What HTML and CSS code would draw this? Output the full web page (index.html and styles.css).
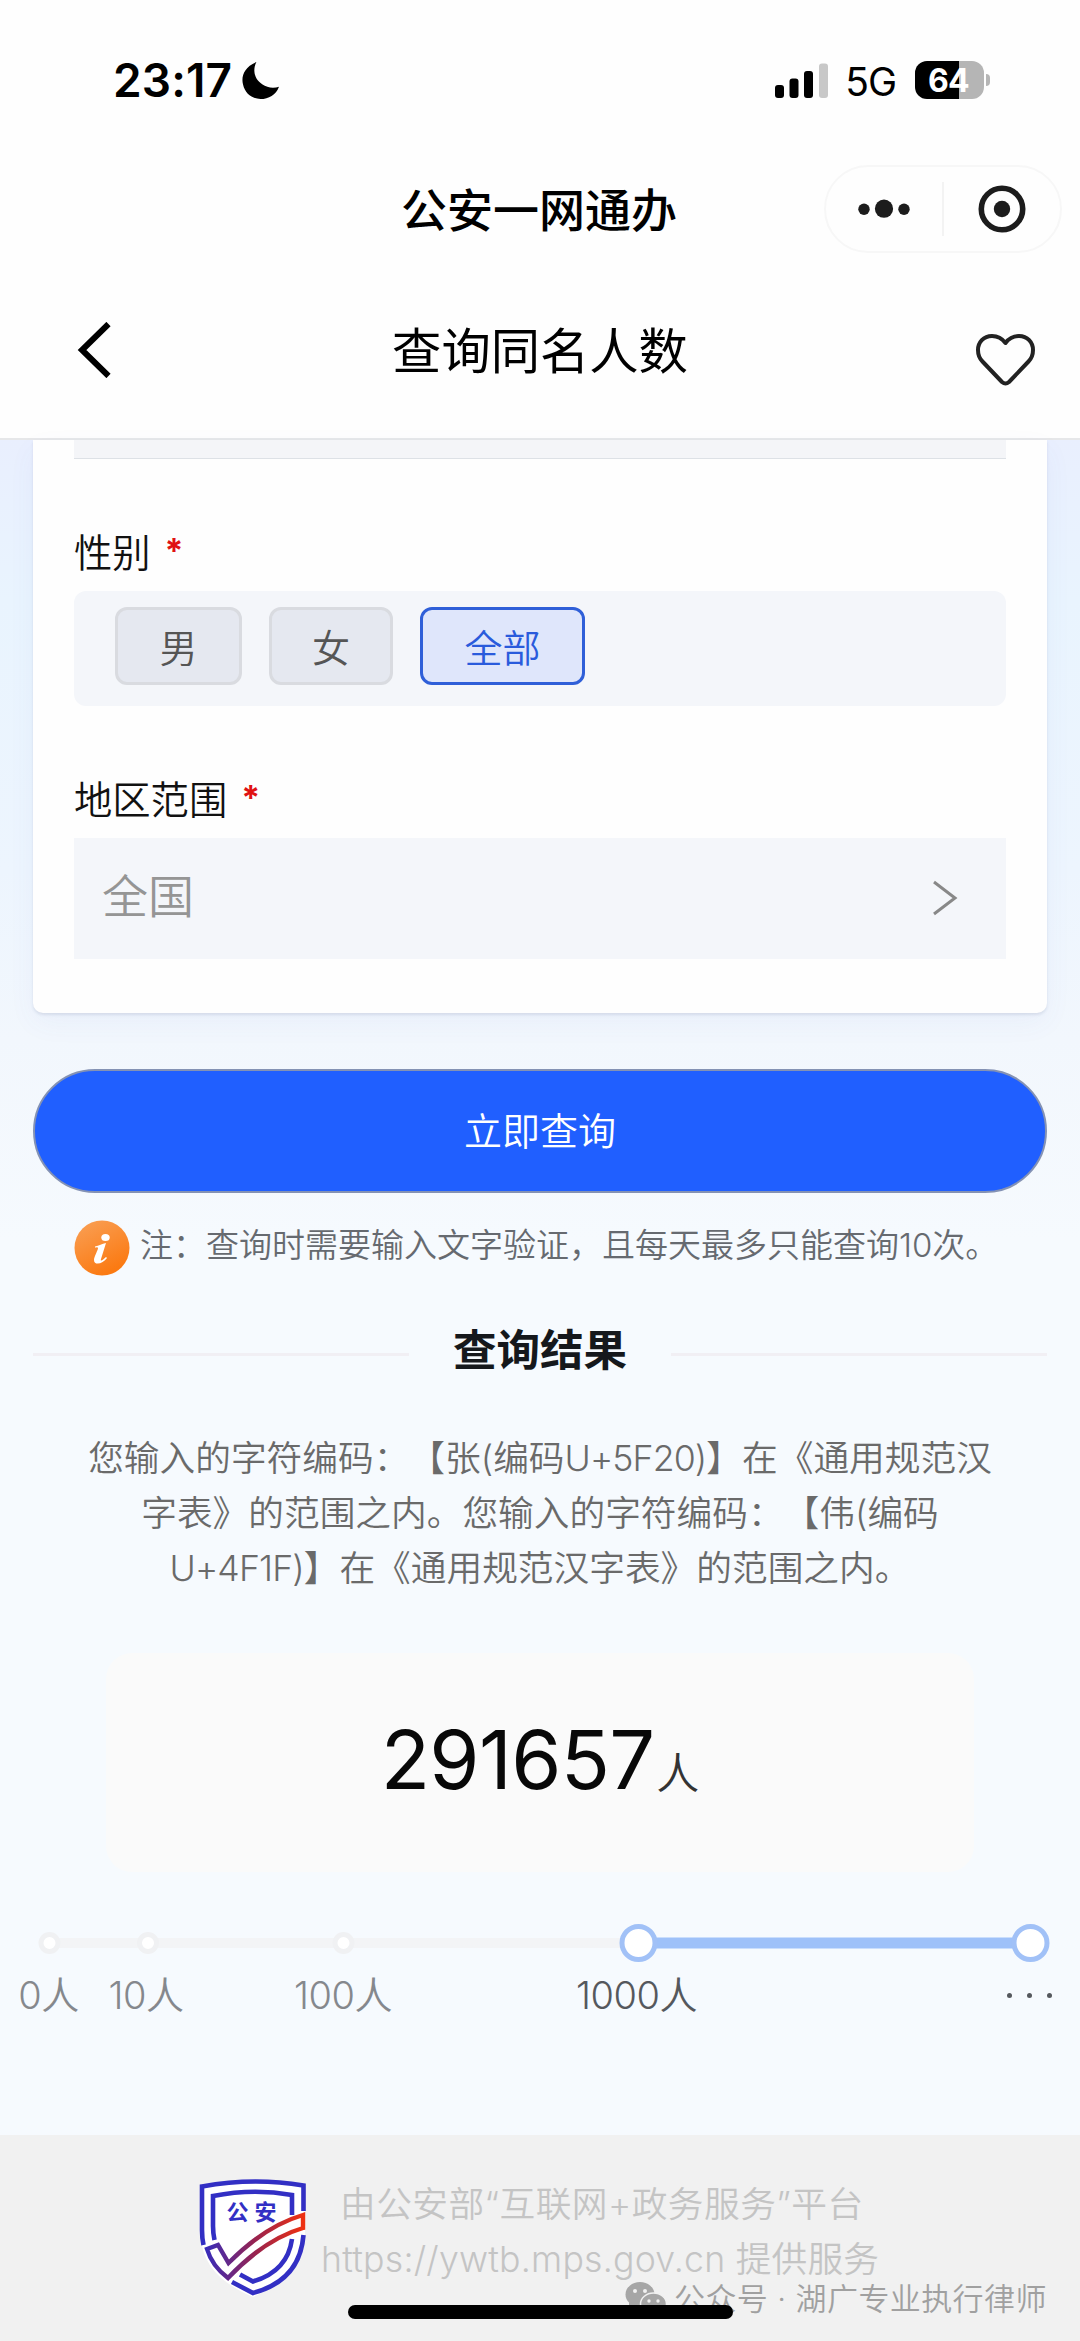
FILE: index.html
```html
<!DOCTYPE html>
<html lang="zh-CN">
<head>
<meta charset="utf-8">
<title>公安一网通办</title>
<link rel="stylesheet" href="styles.css">
</head>
<body>
<div class="screen">
  <header class="top">
    <div class="status">
      <div class="status-left">
        <span class="time">23:17</span>
        <svg class="moon" viewBox="0 0 36 36"><path d="M14 0C2 5-1 14 1 22c2 9 9 14 17 14 8 0 15-4 18-12-5 2-12 1-16-2C12 17 10 8 14 0z"/></svg>
      </div>
      <div class="status-right">
        <svg class="signal" viewBox="0 0 53 35"><rect y="22" width="9" height="13" rx="3"/><rect x="14.500" y="15.500" width="9" height="19.500" rx="3"/><rect x="29" y="8" width="9" height="27" rx="3"/><rect x="44" y="0.500" width="9" height="34.500" rx="3" fill="#c8c8c8"/></svg>
        <span class="net">5G</span>
        <div class="battery"><span>64</span></div>
        <div class="nub"></div>
      </div>
    </div>
    <div class="appbar">
      <h1 class="app-title">公安一网通办</h1>
      <div class="capsule">
        <svg class="dots" viewBox="0 0 52 20"><circle cx="6" cy="10.300" r="5.700"/><circle cx="26" cy="9.700" r="9.100"/><circle cx="46" cy="10.300" r="5.700"/></svg>
        <i class="cap-line"></i>
        <svg class="target" viewBox="0 0 48 48"><circle cx="24" cy="24" r="20.700" fill="none" stroke="#1c1c1c" stroke-width="5.600"/><circle cx="24" cy="24" r="8.200"/></svg>
      </div>
    </div>
    <div class="navbar">
      <svg class="back" viewBox="0 0 34 56"><path d="M31.500 2L5 28l26.500 26" fill="none" stroke="#000" stroke-width="6"/></svg>
      <h2 class="nav-title">查询同名人数</h2>
      <svg class="heart" viewBox="0 0 62 54"><path d="M30.500 10C26 4 21 3 17 3C8.500 3 3 9.500 3 17C3 23 4.500 25.500 7.500 28.500L27 49Q30.500 52 34 49L53.500 28.500C56.500 25.500 58 23 58 17C58 9.500 52.500 3 44 3C40 3 35 4 30.500 10z" fill="none" stroke="#222" stroke-width="4" stroke-linejoin="round"/></svg>
    </div>
  </header>

  <main class="content">
    <section class="card">
      <div class="input-rest"></div>
      <div class="label label-sex">性别<b>*</b></div>
      <div class="options">
        <div class="opt male">男</div>
        <div class="opt female">女</div>
        <div class="opt all">全部</div>
      </div>
      <div class="label label-area">地区范围<b>*</b></div>
      <div class="select"><span>全国</span><svg class="chev" viewBox="0 0 26 36"><path d="M2 2l21 16L2 34" fill="none" stroke="#888" stroke-width="3"/></svg></div>
    </section>

    <div class="submit">立即查询</div>

    <div class="note">
      <svg class="info" viewBox="0 0 56 56"><defs><linearGradient id="og" x1="0" y1="0" x2="0.500" y2="1"><stop offset="0" stop-color="#f9a158"/><stop offset="1" stop-color="#fb7a12"/></linearGradient></defs><circle cx="28" cy="28" r="27.500" fill="url(#og)"/><ellipse cx="31.500" cy="17.500" rx="4.200" ry="3.600" fill="#fff"/><path d="M21 26.500c4-1 7-2.500 11-3.500l-5 16c-1 3 2 1 5-2l1 1c-4 6-13 8-13 2 0-3 3-8 4-11.500 0-2-2-1-3-1z" fill="#fff"/></svg>
      <span>注：查询时需要输入文字验证，且每天最多只能查询10次。</span>
    </div>

    <div class="result-head"><i></i><h3>查询结果</h3><i></i></div>

    <p class="desc"><span>您输入的字符编码：【张(编码<em>U+5F20)</em>】在《通用规范汉</span><span>字表》的范围之内。您输入的字符编码：【伟(编码</span><span><em>U+4F1F)</em>】在《通用规范汉字表》的范围之内。</span></p>

    <div class="count"><span class="num">291657</span><span class="unit">人</span></div>

    <div class="scale">
      <svg class="track" viewBox="0 0 1080 44"><path d="M49 22H638" stroke="#f3f4f6" stroke-width="10"/><path d="M638 22H1030" stroke="#9ec1f9" stroke-width="11"/><g fill="#fff" stroke="#f0f1f3" stroke-width="5"><circle cx="49.500" cy="22" r="8.500"/><circle cx="148" cy="22" r="8.500"/><circle cx="343.500" cy="22" r="8.500"/></g><g fill="#fff" stroke="#a1c1f7" stroke-width="5"><circle cx="638.500" cy="22" r="16.500"/><circle cx="1030.500" cy="22" r="16.500"/></g></svg>
      <div class="ticks"><span>0人</span><span>10人</span><span>100人</span><span class="on">1000人</span><span class="more"><i></i><i></i><i></i></span></div>
    </div>
  </main>

  <footer class="foot">
    <svg class="shield" viewBox="0 0 108 120">
      <defs><linearGradient id="tick" x1="0" x2="1"><stop offset="0" stop-color="#3a2cb8"/><stop offset="0.500" stop-color="#98234f"/><stop offset="1" stop-color="#ee3011"/></linearGradient></defs>
      <path d="M2 7Q54-3 106 7V60Q104 98 54 119 4 98 2 60z" fill="#fff"/>
      <path d="M4.500 67Q3 60 3 52V8.500Q54-1 104.500 7.500V33M104.500 57C102 89 84 107 54 115L33 104" fill="none" stroke="#322fc4" stroke-width="4.600"/>
      <path d="M15.500 62Q14 55 14 48V18Q54 10 93 17V37M93 61C90 83 76 97 54 103.500L41 96.500" fill="none" stroke="#322fc4" stroke-width="4.600"/>
      <path d="M8 71L19 67 29.500 85Q66 48 104 37V50Q66 61 29 100 13 88 8 71z" fill="#fff" stroke="url(#tick)" stroke-width="4.400"/>
      <text x="27.500" y="41.500" class="shield-text">公</text><text x="55.500" y="41.500" class="shield-text">安</text>
    </svg>
    <div class="foot-text"><span class="f1">由公安部“互联网+政务服务”平台</span><span class="f2">https://ywtb.mps.gov.cn 提供服务</span></div>
    <div class="watermark"><svg class="wx" viewBox="0 0 42 34"><ellipse cx="15" cy="12.500" rx="14.500" ry="12.500"/><path d="M4 20l0 8 8-5z"/><ellipse cx="28.500" cy="22" rx="13" ry="11" stroke="#f1f1f1" stroke-width="1.500"/><g fill="#f1f1f1"><circle cx="10" cy="9" r="2"/><circle cx="20" cy="9" r="2"/><circle cx="24" cy="19" r="1.700"/><circle cx="33" cy="19" r="1.700"/></g></svg><span>公众号 · 湖广专业执行律师</span></div>
    <div class="home"></div>
  </footer>
</div>
</body>
</html>
```
FILE: styles.css
```css
* { box-sizing: border-box; margin: 0; padding: 0; }
body {
  width: 1080px;
  font-family: Inter, "Noto Sans CJK SC", sans-serif;
  font-weight: 350;
  font-feature-settings: "calt" 0;
  text-spacing-trim: space-all;
  color: #111;
}
svg { display: block; flex: none; }
i { display: block; }
em { font-style: normal; letter-spacing: -0.9px; }
span { white-space: nowrap; }
.screen { width: 1080px; height: 2341px; display: flex; flex-direction: column; overflow: hidden; background: #f6fafe; }

.top { height: 440px; flex: none; background: #fefefe; border-bottom: 2px solid #e6e7e9; }
.status { height: 160px; padding: 0 90px 0 113px; display: flex; justify-content: space-between; align-items: center; }
.status-left, .status-right { display: flex; align-items: center; }
.time { font-size: 46px; font-weight: 600; letter-spacing: 0.1px; line-height: 60px; color: #000; }
.moon { width: 37px; height: 37px; margin-left: 10px; margin-top: 1px; }
.signal { width: 53px; height: 35px; }
.net { margin-left: 17px; font-size: 39px; font-weight: 400; line-height: 50px; letter-spacing: -1px; padding-top: 3px; color: #000; }
.battery { margin-left: 19px; width: 69px; height: 38px; padding-right: 2px; border-radius: 12px; background: linear-gradient(90deg, #000 44px, #b5b5b5 44px); color: #fff; font-size: 32px; font-weight: 650; line-height: 39px; letter-spacing: -0.8px; text-align: center; }
.nub { width: 4px; height: 12px; margin-left: 2px; background: #b5b5b5; border-radius: 0 4px 4px 0; }

.appbar { height: 98px; display: grid; grid-template-columns: 1fr 274px 1fr; align-items: center; }
.app-title { grid-column: 2; margin: 2px 0 0 -2px; font-size: 46px; font-weight: 500; line-height: 60px; text-align: center; white-space: nowrap; color: #000; }
.capsule { justify-self: end; width: 238px; height: 88px; margin-right: 18px; border: 2px solid #f7f7f7; border-radius: 44px; display: flex; align-items: center; fill: #1c1c1c; }
.dots { width: 52px; height: 20px; margin-left: 32px; }
.cap-line { width: 2px; height: 54px; margin-left: 32px; background: #f3f3f3; }
.target { width: 48px; height: 48px; margin-left: 34px; }

.navbar { height: 180px; padding: 0 43px; display: grid; grid-template-columns: 1fr 300px 1fr; align-items: center; }
.back { width: 34px; height: 56px; margin: 4px 0 0 34px; }
.nav-title { margin-top: 6px; font-size: 49.300px; font-weight: 400; line-height: 64px; text-align: center; white-space: nowrap; color: #000; }
.heart { width: 62px; height: 54px; justify-self: end; margin-top: 23px; }

.content { height: 1695px; flex: none; background: linear-gradient(180deg, #e9effe 0, #e9f4fe 160px, #edf5fe 430px, #f2f7fd 600px, #f6fafe 800px, #f6fafe 100%); }
.card { width: 1014px; height: 573px; margin: 0 auto; padding: 0 41px; background: #fefefe; border-radius: 0 0 10px 10px; box-shadow: 0 2px 3px rgba(70,80,120,.13), 0 10px 28px rgba(80,100,200,.05); }
.input-rest { height: 19px; background: #f4f5f8; border-bottom: 1px solid #dde1e6; }
.label { display: flex; font-size: 38.300px; line-height: 50px; }
.label b { margin-left: 14px; font-size: 34px; font-weight: 700; line-height: 45px; color: #e01212; }
.label-sex { margin-top: 69px; }
.options { margin-top: 13px; height: 115px; padding: 16px 41px; border-radius: 12px; background: #f4f6fa; display: flex; }
.opt { height: 78px; border: 3px solid #d9dbe0; border-radius: 12px; background: #e5e8f0; font-size: 38px; line-height: 76px; text-align: center; color: #555; }
.male { width: 127px; }
.female { width: 124px; margin-left: 27px; }
.all { width: 165px; margin-left: 27px; background: #dfe6fb; border-color: #2f5fd8; color: #2a5bdc; }
.label-area { margin-top: 69px; }
.select { margin-top: 13px; height: 121px; padding: 0 48px 5px 28px; background: #f4f6fa; display: flex; align-items: center; justify-content: space-between; font-size: 46px; line-height: 60px; color: #959595; }
.chev { width: 26px; height: 36px; margin-top: 3px; }

.submit { width: 1014px; height: 124px; margin: 56px auto 0; border: 2px solid #8492b4; border-radius: 62px; background: #205fff; color: #fff; font-size: 38px; line-height: 120px; text-align: center; }
.note { margin-top: 26px; height: 58px; padding-left: 74px; display: flex; align-items: center; font-size: 33px; line-height: 44px; color: #666a70; }
.info { width: 56px; height: 56px; margin-right: 10px; }
.note span { margin-top: -7px; }
.result-head { margin-top: 43px; height: 60px; padding: 0 33px; display: flex; align-items: center; justify-content: space-between; }
.result-head i { width: 376px; height: 3px; margin-top: 8px; background: #f1eff4; }
.result-head h3 { font-size: 43.500px; font-weight: 600; line-height: 60px; color: #15181c; }
.desc { margin-top: 51px; display: flex; flex-direction: column; align-items: center; font-size: 35.700px; line-height: 55px; color: #6a6a6a; }
.count { width: 868px; height: 219px; margin: 57px auto 0; border-radius: 26px; background: #fafafa; display: flex; align-items: baseline; justify-content: center; }
.num { font-size: 81px; line-height: 214px; font-weight: 400; letter-spacing: -0.7px; color: #080808; }
.unit { margin-left: 2px; font-size: 43px; color: #333; }
.scale { margin-top: 49px; }
.track { width: 1080px; height: 44px; }
.ticks { margin-top: 2px; display: grid; grid-template-columns: 97px 98px 296px 291px 1fr; align-items: center; font-size: 38px; line-height: 56px; color: #85888d; letter-spacing: -0.5px; text-align: center; }
.ticks .on { color: #55585d; }
.more { padding-left: 225px; display: flex; gap: 15px; }
.more i { width: 5px; height: 5px; border-radius: 50%; background: #55585d; }

.foot { position: relative; height: 206px; flex: none; padding: 43px 0 0 199px; background: #f1f1f1; display: flex; align-items: flex-start; }
.shield { width: 108px; height: 120px; }
.shield-text { font-family: "Noto Sans CJK SC", sans-serif; font-size: 22px; font-weight: 700; fill: #322fc4; }
.foot-text { margin: -1px 0 0 14px; display: flex; flex-direction: column; font-size: 35.700px; line-height: 55px; color: #c4c4c4; }
.f1 { margin-left: 19px; letter-spacing: 0.45px; }
.f2 { letter-spacing: 0.2px; }
.watermark { position: absolute; left: 625px; top: 147px; display: flex; align-items: flex-start; fill: #a6a6a6; color: #a0a0a0; font-size: 31px; line-height: 33px; letter-spacing: 0.4px; }
.wx { width: 42px; height: 34px; margin-right: 7px; }
.home { position: absolute; left: 348px; top: 170px; width: 385px; height: 14px; border-radius: 7px; background: #000; }
```
